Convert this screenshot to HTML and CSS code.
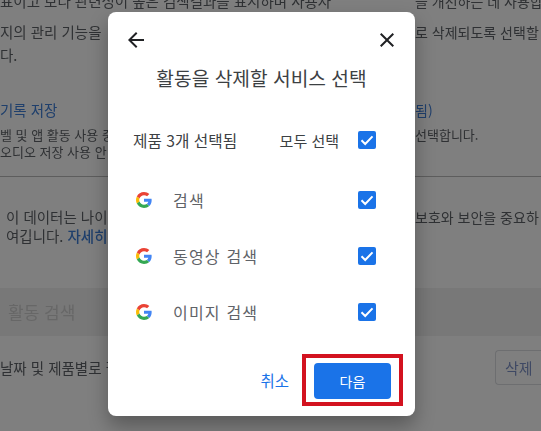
FILE: index.html
```html
<!DOCTYPE html>
<html lang="ko">
<head>
    <meta charset="UTF-8">
    <meta name="viewport" content="width=device-width, initial-scale=1.0">
    <title>활동 삭제</title>
    <link rel="stylesheet" href="styles.css">
</head>
<body>
    <!-- page behind the scrim -->
    <div class="page">
        <div class="line top-line">
            <span class="left">표이고 보다 관련성이 높은 검색결과를 표시하며 사용자</span>
            <span class="right">을 개선하는 데 사용합니</span>
        </div>
        <div class="line manage-line">
            <span class="left">지의 관리 기능을</span>
            <span class="right">로 삭제되도록 선택할</span>
        </div>
        <div class="line short-line"><span class="left">다.</span></div>

        <div class="line save-title">
            <span class="left link">기록 저장</span>
            <span class="right link">됨)</span>
        </div>
        <div class="line detail-line">
            <span class="left">벨 및 앱 활동 사용 중</span>
            <span class="right">선택합니다.</span>
        </div>
        <div class="line detail-line"><span class="left">오디오 저장 사용 안</span></div>
        <div class="divider"></div>

        <div class="line data-line">
            <span class="left indent">이 데이터는 나이</span>
            <span class="right">보호와 보안을 중요하</span>
        </div>
        <div class="line data-second">
            <span class="left indent">여깁니다. <span class="link bold">자세히</span></span>
        </div>

        <div class="search-band"><span class="search-label">활동 검색</span></div>

        <div class="filter-row">
            <span class="filter-text">날짜 및 제품별로 필</span>
            <span class="delete-btn">삭제</span>
        </div>
    </div>

    <div class="scrim"></div>

    <div class="dialog">
        <div class="dialog-top">
            <svg class="top-icon" viewBox="0 0 24 24"><path d="M20 11H7.83l5.59-5.59L12 4l-8 8 8 8 1.41-1.41L7.83 13H20z"/></svg>
            <svg class="top-icon" viewBox="0 0 24 24"><path d="M19 6.41 17.59 5 12 10.59 6.41 5 5 6.41 10.59 12 5 17.59 6.41 19 12 13.41 17.59 19 19 17.59 13.41 12z"/></svg>
        </div>
        <h2 class="dialog-title">활동을 삭제할 서비스 선택</h2>

        <div class="select-all">
            <span class="count">제품 3개 선택됨</span>
            <span class="all-label">모두 선택</span>
            <svg class="check" viewBox="0 0 18 18"><rect width="18" height="18" rx="2"/><path d="M3.5 9.3 7.2 13l7.3-7.6"/></svg>
        </div>

        <div class="service">
            <svg class="g-logo" viewBox="0 0 48 48"><use href="#g"/></svg>
            <span class="service-name">검색</span>
            <svg class="check" viewBox="0 0 18 18"><rect width="18" height="18" rx="2"/><path d="M3.5 9.3 7.2 13l7.3-7.6"/></svg>
        </div>
        <div class="service">
            <svg class="g-logo" viewBox="0 0 48 48"><use href="#g"/></svg>
            <span class="service-name">동영상 검색</span>
            <svg class="check" viewBox="0 0 18 18"><rect width="18" height="18" rx="2"/><path d="M3.5 9.3 7.2 13l7.3-7.6"/></svg>
        </div>
        <div class="service">
            <svg class="g-logo" viewBox="0 0 48 48"><use href="#g"/></svg>
            <span class="service-name">이미지 검색</span>
            <svg class="check" viewBox="0 0 18 18"><rect width="18" height="18" rx="2"/><path d="M3.5 9.3 7.2 13l7.3-7.6"/></svg>
        </div>

        <div class="actions">
            <span class="cancel">취소</span>
            <span class="next-mark"><span class="next">다음</span></span>
        </div>
    </div>

    <svg class="defs" width="0" height="0">
        <defs>
            <g id="g">
                <path fill="#EA4335" d="M24 9.5c3.54 0 6.71 1.22 9.21 3.6l6.85-6.85C35.9 2.38 30.47 0 24 0 14.62 0 6.51 5.38 2.56 13.22l7.98 6.19C12.43 13.72 17.74 9.5 24 9.5z"/>
                <path fill="#4285F4" d="M46.98 24.55c0-1.57-.15-3.09-.38-4.55H24v9.02h12.94c-.58 2.96-2.26 5.48-4.78 7.18l7.73 6c4.51-4.18 7.09-10.36 7.09-17.65z"/>
                <path fill="#FBBC05" d="M10.53 28.59c-.48-1.45-.76-2.99-.76-4.59s.27-3.14.76-4.59l-7.98-6.19C.92 16.46 0 20.12 0 24c0 3.88.92 7.54 2.56 10.78l7.97-6.19z"/>
                <path fill="#34A853" d="M24 48c6.48 0 11.93-2.13 15.89-5.81l-7.73-6c-2.15 1.45-4.92 2.3-8.16 2.3-6.26 0-11.57-4.22-13.47-9.91l-7.98 6.19C6.51 42.62 14.62 48 24 48z"/>
            </g>
        </defs>
    </svg>
</body>
</html>
```

FILE: styles.css
```css
html, body {
    margin: 0;
    height: 431px;
    overflow: hidden;
}
body {
    position: relative;
    width: 541px;
    background: #fff;
    font-family: "Noto Sans CJK KR", "Noto Sans", sans-serif;
    color: #5f6368;
}

/* page behind */
.page {
    height: 431px;
    filter: blur(0.6px);
    font-size: 14.5px;
    line-height: 20px;
}
.line {
    display: flex;
    white-space: nowrap;
    height: 20px;
}
.left {
    flex: 0 0 415px;
    overflow: hidden;
}
.right {
    flex: 0 0 126px;
    overflow: hidden;
    font-size: 14px;
}
.indent {
    padding-left: 6px;
    box-sizing: border-box;
}
.link {
    color: #3f7fd8;
}
.bold {
    font-weight: 500;
}
.top-line {
    margin-top: -9px;
}
.manage-line {
    margin-top: 11px;
}
.short-line {
    margin-top: 3px;
}
.save-title {
    margin-top: 35px;
}
.detail-line {
    height: 17px;
    line-height: 17px;
    font-size: 13px;
}
.detail-line .right {
    font-size: 13px;
}
.save-title + .detail-line {
    margin-top: 6px;
}
.divider {
    margin-top: 16px;
    height: 1px;
    background: #bbb;
}
.data-line {
    margin-top: 30px;
}
.data-second {
    margin-top: -1px;
}
.search-band {
    margin-top: 42px;
    height: 48px;
    background: #f0f0f0;
    display: flex;
    align-items: center;
    padding-left: 8px;
    font-size: 17px;
    color: #cfcfcf;
}
.filter-row {
    display: flex;
    justify-content: space-between;
    align-items: center;
    margin-top: 14px;
}
.filter-text {
    white-space: nowrap;
}
.delete-btn {
    width: 46px;
    height: 35px;
    border: 1px solid #dadce0;
    border-right: 0;
    border-radius: 4px 0 0 4px;
    color: #7f93c8;
    font-size: 15px;
    line-height: 33px;
    padding-left: 9px;
    box-sizing: border-box;
    background: #fff;
}

/* scrim */
.scrim {
    position: absolute;
    inset: 0;
    background: rgba(0, 0, 0, 0.5);
}

/* dialog */
.dialog {
    position: absolute;
    left: 108px;
    top: 12px;
    width: 307px;
    height: 404px;
    box-sizing: border-box;
    padding: 16px 16px 0;
    background: #fff;
    border-radius: 8px;
    box-shadow: 0 10px 20px rgba(0, 0, 0, 0.3);
}
.dialog-top {
    display: flex;
    justify-content: space-between;
}
.top-icon {
    width: 24px;
    height: 24px;
    fill: #202124;
}
.dialog-title {
    margin: 13px 0 0;
    text-align: center;
    font-size: 19.2px;
    font-weight: 400;
    line-height: 26px;
    color: #3c4043;
}
.select-all {
    display: flex;
    align-items: center;
    height: 18px;
    margin-top: 40px;
    padding: 0 23px 0 9px;
    font-size: 15.7px;
    color: #3c4043;
}
.count {
    flex: 1;
    white-space: nowrap;
}
.all-label {
    margin-right: 19px;
    font-size: 15px;
    white-space: nowrap;
}
.check {
    flex: none;
    width: 18px;
    height: 18px;
}
.check rect {
    fill: #1a73e8;
}
.check path {
    fill: none;
    stroke: #fff;
    stroke-width: 2;
}
.service {
    display: flex;
    align-items: center;
    height: 18px;
    margin-top: 38px;
    padding: 0 23px 0 12px;
    font-size: 16px;
    letter-spacing: 1.2px;
    color: #5f6368;
}
.select-all + .service {
    margin-top: 42px;
}
.g-logo {
    flex: none;
    width: 16px;
    height: 16px;
    margin-right: 21px;
}
.service-name {
    flex: 1;
}
.actions {
    display: flex;
    justify-content: flex-end;
    align-items: center;
    margin-top: 33px;
    margin-right: -4px;
}
.cancel {
    margin-right: 13px;
    font-size: 15.5px;
    color: #1a73e8;
}
.next-mark {
    display: flex;
    padding: 5px 8px 3px;
    border: 4px solid #d3121f;
}
.next {
    width: 77px;
    height: 36px;
    border-radius: 4px;
    background: #1a73e8;
    color: #fff;
    font-size: 14px;
    line-height: 36px;
    text-align: center;
}
.defs {
    position: absolute;
}
```
